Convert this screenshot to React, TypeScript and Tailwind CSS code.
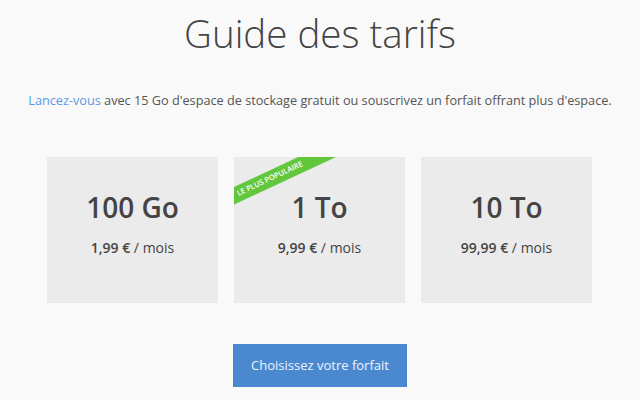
import React from "react"

const plans = [
  { size: "100 Go", price: "1,99 €", popular: false },
  { size: "1 To", price: "9,99 €", popular: true },
  { size: "10 To", price: "99,99 €", popular: false },
]

function PlanCard({ size, price, popular }: { size: string; price: string; popular: boolean }) {
  return (
    <div className="relative w-[171px] h-[146px] bg-[#ebebeb] overflow-hidden flex flex-col items-center pt-[33px]">
      {popular && (
        <div className="absolute left-[-64px] top-[14px] w-[200px] h-[16px] bg-[#62c73d] -rotate-[25deg] flex items-center justify-center">
          <span className="text-[7.5px] leading-none font-semibold text-white uppercase">
            Le plus populaire
          </span>
        </div>
      )}
      <div className="text-[28px] leading-[34px] font-semibold text-[#444]">{size}</div>
      <div className="mt-[14px] text-[14px] leading-[20px] text-[#444]">
        <span className="font-semibold">{price}</span> / mois
      </div>
    </div>
  )
}

export default function App() {
  return (
    <div
      className="w-[640px] h-[400px] bg-[#f9f9f9] flex flex-col items-center overflow-hidden"
      style={{ fontFamily: '"Open Sans", "Noto Sans", sans-serif' }}
    >
      <h1 className="mt-[9px] text-[38.5px] leading-[48px] font-light text-[#444]">Guide des tarifs</h1>
      <p className="mt-[33px] text-[12.7px] leading-[20px] text-[#555] whitespace-nowrap">
        <a className="text-[#5b9be6]">Lancez-vous</a> avec 15 Go d'espace de stockage gratuit ou souscrivez un
        forfait offrant plus d'espace.
      </p>
      <div className="mt-[47px] -ml-px flex gap-[16px]">
        {plans.map((p) => (
          <PlanCard key={p.size} {...p} />
        ))}
      </div>
      <button className="mt-[41px] w-[174px] h-[43px] bg-[#4a89d0] text-[#eef4fb] text-[13px] flex items-center justify-center">
        Choisissez votre forfait
      </button>
    </div>
  )
}
